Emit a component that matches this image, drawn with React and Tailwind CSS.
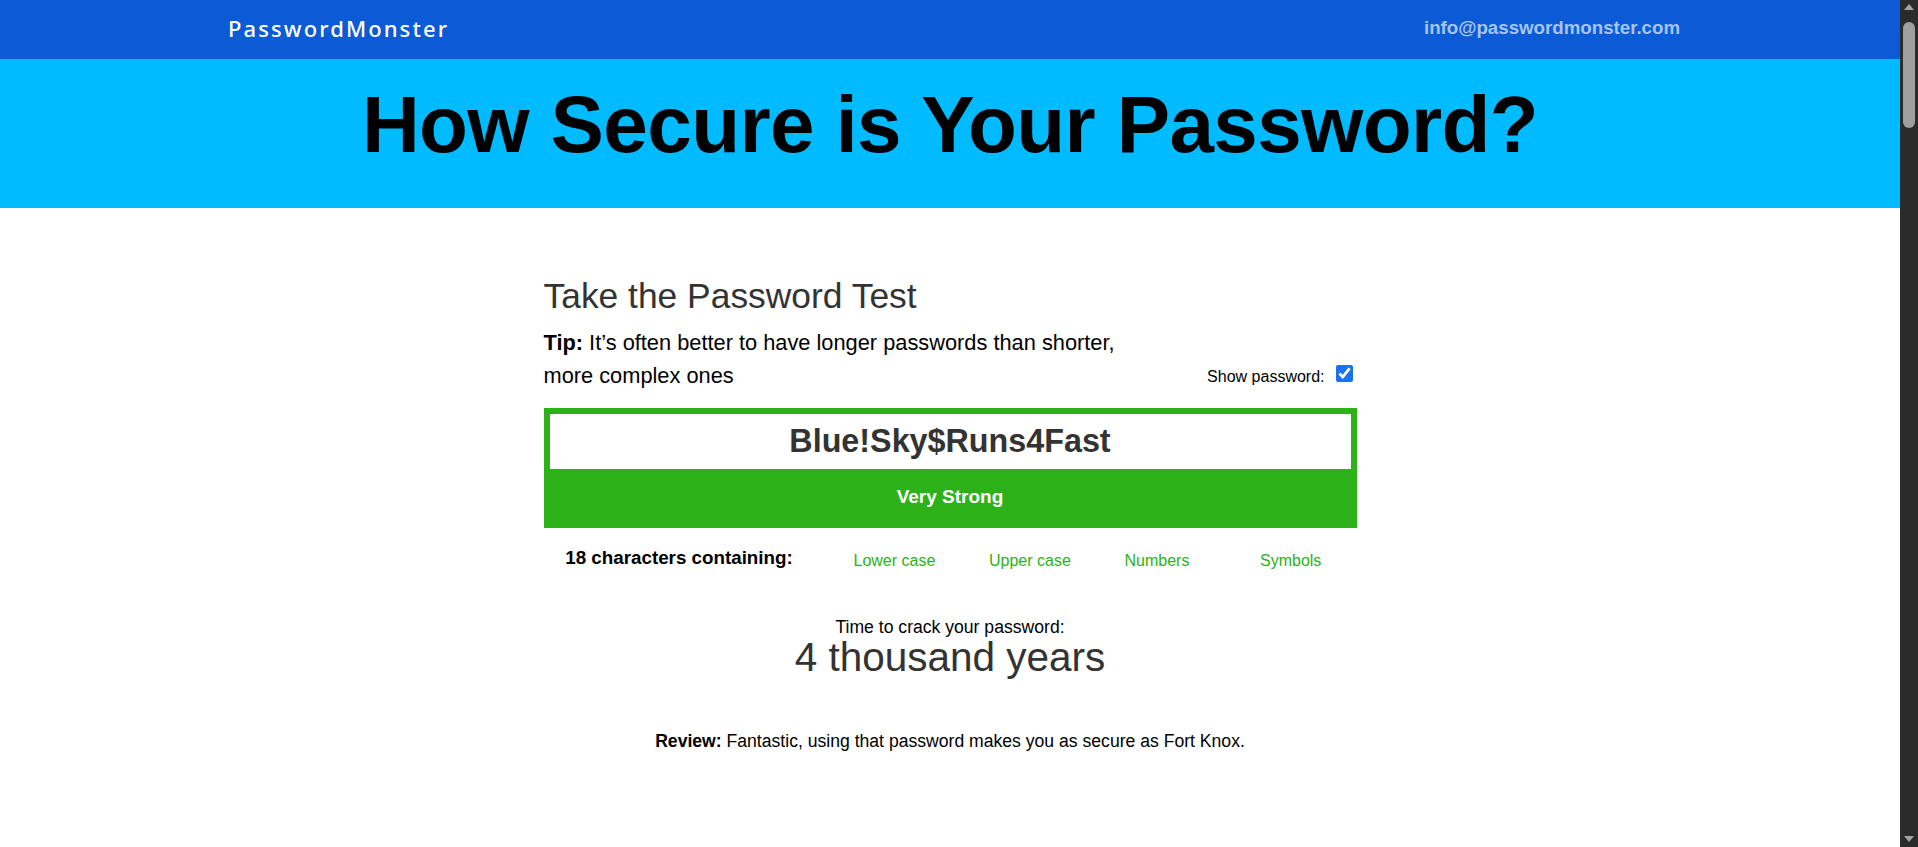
import { useState } from 'react';

export default function App() {
  const [password, setPassword] = useState('Blue!Sky$Runs4Fast');
  const [showPassword, setShowPassword] = useState(true);

  const checks = ['Lower case', 'Upper case', 'Numbers', 'Symbols'];

  return (
    <div className="flex h-screen overflow-hidden">
      <div className="flex-1 min-w-0 overflow-hidden bg-white font-['Liberation_Sans',Arial,sans-serif]">
        {/* Top bar */}
        <header className="bg-[#0b5bd6] h-[59px]">
          <div className="w-[1454px] mx-auto h-full flex items-center justify-between pb-[2px]">
            <a href="#" className="pl-[5px] text-white text-[22px] font-medium tracking-[2.1px] font-['Noto_Sans',sans-serif]">
              PasswordMonster
            </a>
            <a href="#" className="-mr-[3px] text-[#a6c4f2] text-[18.7px] font-bold">
              info@passwordmonster.com
            </a>
          </div>
        </header>

        {/* Hero */}
        <section className="bg-[#00bbff] pt-[26px] pb-[43px] text-center">
          <h1 className="text-black text-[80px] leading-[80px] font-bold tracking-[-0.6px]">
            How Secure is Your Password?
          </h1>
        </section>

        {/* Password test */}
        <main className="w-[813px] mx-auto pt-[68px]">
          <h2 className="text-[#333] text-[35.4px] leading-[40px]">Take the Password Test</h2>

          <div className="mt-[10px] flex items-end justify-between">
            <p className="w-[600px] text-black text-[21.8px] leading-[33px]">
              <b>Tip:</b> It’s often better to have longer passwords than shorter, more complex ones
            </p>
            <label className="flex items-end gap-[11px] mb-[3px] text-black text-[16px] leading-[24px]">
              Show password:
              <input
                type="checkbox"
                checked={showPassword}
                onChange={(e) => setShowPassword(e.target.checked)}
                className="w-[17px] h-[17px] mb-[7px] mr-[4px] accent-[#1a73e8]"
              />
            </label>
          </div>

          {/* Input + strength meter */}
          <div className="mt-[16px] bg-[#2db119] px-[6px] pt-[6px]">
            <input
              type={showPassword ? 'text' : 'password'}
              value={password}
              onChange={(e) => setPassword(e.target.value)}
              className="w-full h-[55px] bg-white text-center text-[#333] text-[32.3px] font-bold outline-none"
            />
            <div className="h-[59px] pb-[2px] flex items-center justify-center text-white text-[19px] font-bold">
              Very Strong
            </div>
          </div>

          {/* Character classes */}
          <div className="mt-[18px] grid grid-cols-[271px_repeat(4,1fr)] items-start">
            <div className="text-center text-black text-[18.8px] leading-[24px] font-bold">
              {password.length} characters containing:
            </div>
            {checks.map((c) => (
              <div key={c} className="mt-[3px] pl-[39px] text-[#2db119] text-[16px] leading-[24px]">
                {c}
              </div>
            ))}
          </div>

          {/* Crack time */}
          <div className="mt-[45px] text-center">
            <div className="text-black text-[17.6px] leading-[19px]">Time to crack your password:</div>
            <div className="text-[#333] text-[40.5px] leading-[40px]">4 thousand years</div>
          </div>

          <p className="mt-[54px] text-center text-black text-[17.6px] leading-[20px]">
            <b>Review:</b> Fantastic, using that password makes you as secure as Fort Knox.
          </p>
        </main>
      </div>

      {/* Scrollbar */}
      <div className="w-[18px] shrink-0 bg-[#2b2b2b] flex flex-col items-center">
        <svg width="10" height="6" viewBox="0 0 10 6" className="mt-[4px]">
          <path d="M5 0 L10 6 L0 6 Z" fill="#a3a3a3" />
        </svg>
        <div className="mt-[12px] w-[12px] h-[106px] rounded-full bg-[#9f9f9f]" />
        <div className="flex-1" />
        <svg width="10" height="6" viewBox="0 0 10 6" className="mb-[5px]">
          <path d="M0 0 L10 0 L5 6 Z" fill="#a3a3a3" />
        </svg>
      </div>
    </div>
  );
}
